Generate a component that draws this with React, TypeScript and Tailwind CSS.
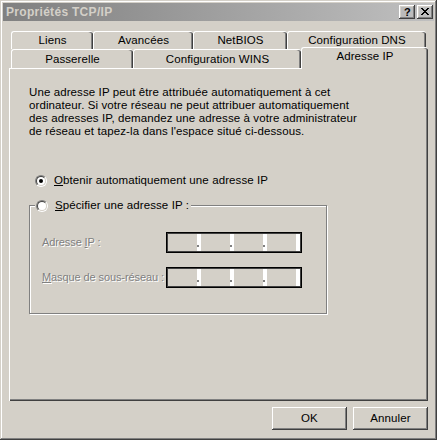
import React from 'react';

const raised =
  'shadow-[inset_-1px_-1px_#404040,inset_1px_1px_#fff,inset_-2px_-2px_#808080,inset_2px_2px_#d4d0c8]';

const Radio = ({ checked }: { checked?: boolean }) => (
  <span className="flex h-[12px] w-[12px] shrink-0 rounded-full border border-t-[#808080] border-l-[#808080] border-r-white border-b-white">
    <span className="flex h-full w-full items-center justify-center rounded-full border border-t-[#404040] border-l-[#404040] border-r-[#d4d0c8] border-b-[#d4d0c8] bg-white">
      {checked && <span className="h-[4px] w-[4px] rounded-full bg-black" />}
    </span>
  </span>
);

const Tab = ({ label, className }: { label: string; className: string }) => (
  <div
    className={`flex items-center justify-center whitespace-nowrap rounded-t-[3px] border-l border-t border-white shadow-[inset_-1px_0_#404040,inset_-2px_0_#808080] ${className}`}
  >
    {label}
  </div>
);

const IpBox = () => (
  <div className="flex h-[21px] w-[136px] shrink-0 border border-black bg-[#d4d0c8] p-[1px] shadow-[inset_0_0_0_1px_#404040]">
    {[0, 1, 2, 3].map((i) => (
      <React.Fragment key={i}>
        <div className="w-[29px]" />
        <div className="flex w-[4px] items-end bg-white pb-[4px]">
          {i < 3 && <span className="h-[2px] w-[2px] bg-[#808080]" />}
        </div>
      </React.Fragment>
    ))}
  </div>
);

const CloseGlyph = () => (
  <svg width="8" height="7" viewBox="0 0 8 7" shapeRendering="crispEdges">
    <path
      fill="#000"
      d="M0 0h2v1H0zM6 0h2v1H6zM1 1h2v1H1zM5 1h2v1H5zM2 2h4v1H2zM3 3h2v1H3zM2 4h4v1H2zM1 5h2v1H1zM5 5h2v1H5zM0 6h2v1H0zM6 6h2v1H6z"
    />
  </svg>
);

export default function App() {
  return (
    <div className="h-[440px] w-[437px] bg-[#d4d0c8] p-[3px] font-['Liberation_Sans',Arial,sans-serif] text-[11.5px] leading-[13px] tracking-[0.1px] text-black shadow-[inset_-1px_-1px_#404040,inset_1px_1px_#d4d0c8,inset_-2px_-2px_#808080,inset_2px_2px_#fff]">
      {/* title bar */}
      <div className="flex h-[18px] items-center justify-between bg-linear-to-r from-[#808080] to-[#c0c0c0] pl-[3px] pr-[1px]">
        <span className="text-[12px] font-bold tracking-[0.3px] text-[#d4d0c8]">Propriétés TCP/IP</span>
        <div className="flex gap-[2px]">
          <div className={`flex h-[14px] w-[16px] items-center justify-center pl-[1px] text-[11px] font-bold ${raised}`}>?</div>
          <div className={`flex h-[14px] w-[16px] items-center justify-center pb-[1px] ${raised}`}>
            <CloseGlyph />
          </div>
        </div>
      </div>

      <div className="mt-[10px] flex flex-col px-[6px]">
        {/* tabs */}
        <div className="flex h-[18px] pl-[2px]">
          <Tab label="Liens" className="w-[82px]" />
          <Tab label="Avancées" className="w-[100px]" />
          <Tab label="NetBIOS" className="w-[94px]" />
          <Tab label="Configuration DNS" className="w-[139px]" />
        </div>
        <div className="relative z-10 flex h-[19px] pl-[2px]">
          <Tab label="Passerelle" className="w-[122px]" />
          <Tab label="Configuration WINS" className="w-[168px]" />
          <div className="-mt-[2px] flex h-[22px] w-[127px] justify-center rounded-t-[3px] border-l border-t border-white bg-[#d4d0c8] pt-[2px] shadow-[inset_-1px_0_#404040,inset_-2px_0_#808080]">
            Adresse IP
          </div>
        </div>

        {/* panel */}
        <div className="flex h-[333px] flex-col border-l border-t border-white pl-[19px] pt-[17px] shadow-[inset_-1px_-1px_#404040,inset_-2px_-2px_#808080]">
          <p className="whitespace-nowrap">
            Une adresse IP peut être attribuée automatiquement à cet
            <br />
            ordinateur. Si votre réseau ne peut attribuer automatiquement
            <br />
            des adresses IP, demandez une adresse à votre administrateur
            <br />
            de réseau et tapez-la dans l'espace situé ci-dessous.
          </p>

          <label className="mt-[36px] flex h-[13px] items-center gap-[7px] pl-[6px]">
            <Radio checked />
            <span>
              <u>O</u>btenir automatiquement une adresse IP
            </span>
          </label>

          <fieldset className="mt-[12px] w-[298px] border border-[#808080] shadow-[inset_1px_1px_#fff,1px_1px_#fff]">
            <legend className="ml-[5px] flex h-[13px] items-center gap-[7px] bg-[#d4d0c8] pr-[2px] pl-[1px]">
              <Radio />
              <span className="whitespace-nowrap">
                <u>S</u>pécifier une adresse IP :
              </span>
            </legend>
            <div className="flex flex-col gap-[14px] pl-[12px] pt-[20px] pb-[25px] text-[11px] tracking-[-0.1px] text-[#808080] [text-shadow:1px_1px_0_#fff]">
              <div className="flex h-[21px] items-center">
                <span className="w-[124px] whitespace-nowrap">
                  Adresse <u>I</u>P :
                </span>
                <IpBox />
              </div>
              <div className="flex h-[21px] items-center">
                <span className="w-[124px] whitespace-nowrap">
                  <u>M</u>asque de sous-réseau :
                </span>
                <IpBox />
              </div>
            </div>
          </fieldset>
        </div>

        {/* buttons */}
        <div className="mt-[6px] flex justify-end gap-[6px]">
          <button className={`flex h-[23px] w-[75px] items-center justify-center ${raised}`}>OK</button>
          <button className={`flex h-[23px] w-[75px] items-center justify-center ${raised}`}>Annuler</button>
        </div>
      </div>
    </div>
  );
}
